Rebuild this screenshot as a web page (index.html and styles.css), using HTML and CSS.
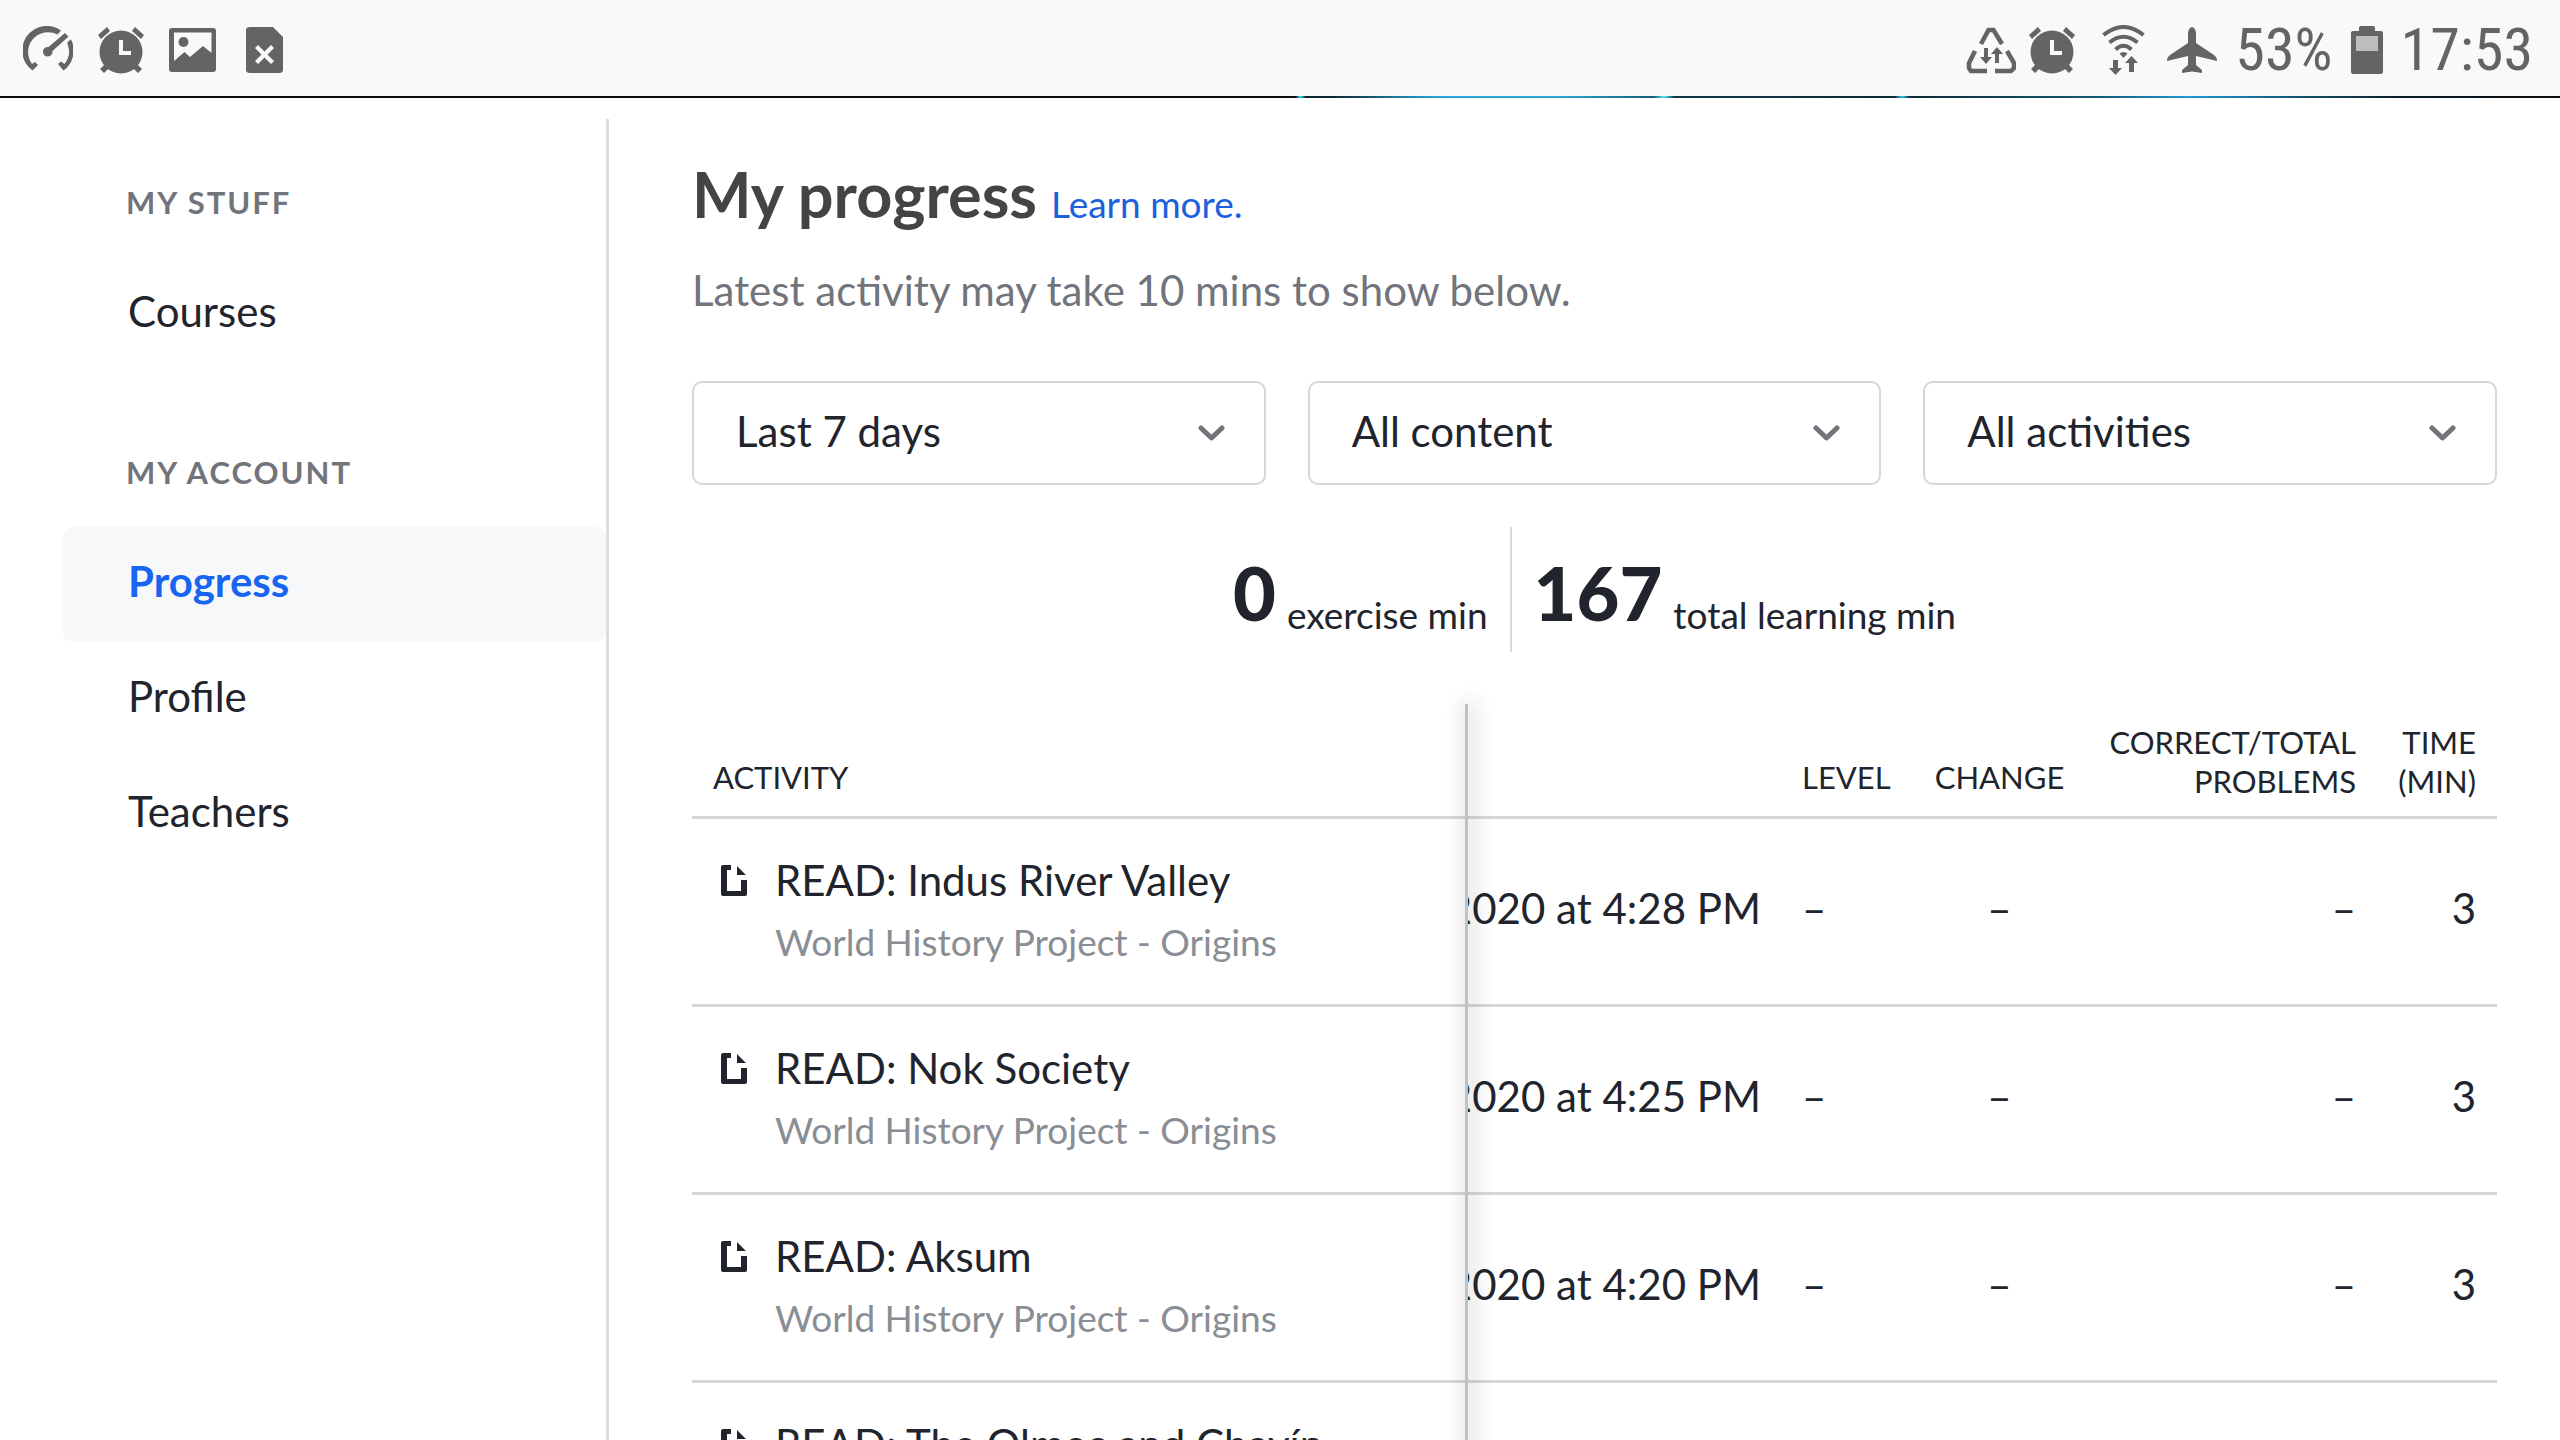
FILE: index.html
```html
<!DOCTYPE html>
<html lang="en">
<head>
<meta charset="utf-8">
<title>My progress</title>
<link rel="stylesheet" href="styles.css">
</head>
<body>
<svg class="defs" aria-hidden="true">
  <symbol id="alarm" viewBox="0 0 48 48">
    <path d="M1 9 10 1 13 5 4 13ZM35 5 38 1 47 9 44 13ZM3 43 8 38 12 42 7 47ZM36 42 40 38 45 43 41 47Z"/>
    <path fill-rule="evenodd" d="M24 4.500a21.500 21.500 0 1 0 0 43a21.500 21.500 0 1 0 0-43ZM22 14H26V25H34V29H22Z"/>
  </symbol>
  <symbol id="article" viewBox="0 0 26 31">
    <path d="M2 0H10V5H6V26H20V15H26V29Q26 31 24 31H2Q0 31 0 29V2Q0 0 2 0ZM16 1 25 10H16Z"/>
  </symbol>
  <symbol id="chevron" viewBox="0 0 27 16">
    <path d="M3 3 13.500 13 24 3" fill="none" stroke="currentColor" stroke-width="5" stroke-linecap="round" stroke-linejoin="round"/>
  </symbol>
</svg>
<header class="status">
  <div class="status-left">
    <svg width="50" height="48" viewBox="0 0 50 48">
      <path d="M38 4.500A24.500 24.500 0 0 0 9.500 44.500L15 39 12 36 9 38A20 20 0 0 1 34.500 8.500ZM44.500 16 48 13.500A24.500 24.500 0 0 1 40.500 44.500L35 38 38 35.500 41.500 38A20 20 0 0 0 44.500 18Z"/>
      <path d="M42 7 45.500 10.500 29.500 25A4.800 4.800 0 1 1 25.500 21Z"/>
    </svg>
    <svg width="48" height="48"><use href="#alarm"/></svg>
    <svg width="47" height="48" viewBox="0 0 47 48">
      <path fill-rule="evenodd" d="M3 2H44Q47 2 47 5V43Q47 46 44 46H3Q0 46 0 43V5Q0 2 3 2ZM5 6.500V35L15.500 26 21 31 34 20 42.500 27V6.500Z"/>
      <circle cx="14.500" cy="16" r="5"/>
    </svg>
    <svg width="37" height="48" viewBox="0 0 37 48">
      <path fill-rule="evenodd" d="M4 1H27L37 11V44Q37 47 33 47H4Q0 47 0 44V4Q0 1 4 1ZM9 22 15.500 28.500 9 35 12 38 18.500 31.500 25 38 28 35 21.500 28.500 28 22 25 19 18.500 25.500 12 19Z"/>
    </svg>
  </div>
  <div class="status-right">
    <div class="signals">
      <svg width="50" height="48" viewBox="0 0 50 48">
        <path d="M15 18 22.500 4H27.500L36 18M9 25 3 37V42L5 45H21M41 25 48 37V42L45 45H29" fill="none" stroke="currentColor" stroke-width="4.500"/>
        <path d="M18 22H22V31H26L20 38 14 31H18ZM29 37V28H25L31 21 37 28H33V37Z"/>
      </svg>
      <svg width="48" height="48"><use href="#alarm"/></svg>
    </div>
    <svg class="wifi" width="43" height="50" viewBox="0 0 43 50">
      <path d="M1.500 10Q21.500-6 41.500 10M7.500 17.500Q21.500 6 35.500 17.500M13.500 24.500Q21.500 17 29.500 24.500" fill="none" stroke="currentColor" stroke-width="4"/>
      <path d="M21.500 33 17.500 28.500Q21.500 25.500 25.500 28.500ZM11 35H16V43H20L13.500 50 7 43H11ZM27 47V38H23L29.500 31 36 38H32V47Z"/>
    </svg>
    <svg width="50" height="48" viewBox="0 0 50 48">
      <path d="M25 1Q29 2 29 8V17L47 29Q50 31 50 35L29 30V39L35 44V47L25 45.500 15 47V44L21 39V30L0 35Q0 31 3 29L21 17V8Q21 2 25 1Z"/>
    </svg>
    <span>53%</span>
    <svg width="32" height="48" viewBox="0 0 32 48">
      <path d="M8 5V2Q8 0 10 0H22Q24 0 24 2V5H30Q32 5 32 7V46Q32 48 30 48H2Q0 48 0 46V7Q0 5 2 5Z"/>
      <rect x="5" y="10" width="22" height="15" fill="#bdbdbd"/>
    </svg>
    <span>17:53</span>
  </div>
</header>
<div class="strip"></div>
<div class="page">
  <nav class="sidebar">
    <h2>MY STUFF</h2>
    <a href="#courses">Courses</a>
    <h2>MY ACCOUNT</h2>
    <a href="#progress" class="active" aria-current="page">Progress</a>
    <a href="#profile">Profile</a>
    <a href="#teachers">Teachers</a>
  </nav>
  <main>
    <div class="title">
      <h1>My progress</h1>
      <a href="#learn">Learn more.</a>
    </div>
    <p class="note">Latest activity may take 10 mins to show below.</p>
    <div class="filters">
      <div class="filter">
        <select aria-label="Date range"><option>Last 7 days</option></select>
        <svg width="27" height="16"><use href="#chevron"/></svg>
      </div>
      <div class="filter">
        <select aria-label="Content"><option>All content</option></select>
        <svg width="27" height="16"><use href="#chevron"/></svg>
      </div>
      <div class="filter">
        <select aria-label="Activity type"><option>All activities</option></select>
        <svg width="27" height="16"><use href="#chevron"/></svg>
      </div>
    </div>
    <div class="stats">
      <div class="stat"><strong>0</strong><span>exercise min</span></div>
      <div class="stat"><strong>167</strong><span>total learning min</span></div>
    </div>
    <div class="activity">
      <table>
        <colgroup><col><col class="c-date"><col class="c-level"><col class="c-change"><col class="c-problems"><col class="c-time"></colgroup>
        <thead>
          <tr><th class="name">ACTIVITY</th><td></td><th>LEVEL</th><th class="mid">CHANGE</th><th class="num two">CORRECT/TOTAL<br>PROBLEMS</th><th class="num two">TIME<br>(MIN)</th></tr>
        </thead>
        <tbody>
          <tr>
            <td class="name"><div class="item"><svg width="26" height="31"><use href="#article"/></svg><span>READ: Indus River Valley</span></div><div class="course">World History Project - Origins</div></td>
            <td class="date"><div>2020 at 4:28 PM</div></td><td>–</td><td class="mid">–</td><td class="num">–</td><td class="num">3</td>
          </tr>
          <tr>
            <td class="name"><div class="item"><svg width="26" height="31"><use href="#article"/></svg><span>READ: Nok Society</span></div><div class="course">World History Project - Origins</div></td>
            <td class="date"><div>2020 at 4:25 PM</div></td><td>–</td><td class="mid">–</td><td class="num">–</td><td class="num">3</td>
          </tr>
          <tr>
            <td class="name"><div class="item"><svg width="26" height="31"><use href="#article"/></svg><span>READ: Aksum</span></div><div class="course">World History Project - Origins</div></td>
            <td class="date"><div>2020 at 4:20 PM</div></td><td>–</td><td class="mid">–</td><td class="num">–</td><td class="num">3</td>
          </tr>
          <tr>
            <td class="name"><div class="item"><svg width="26" height="31"><use href="#article"/></svg><span>READ: The Olmec and Chavín</span></div></td>
            <td></td><td></td><td></td><td></td><td></td>
          </tr>
        </tbody>
      </table>
      <div class="edge"></div>
    </div>
  </main>
</div>
</body>
</html>
```
FILE: styles.css
```css
* { box-sizing: border-box; }
body {
  margin: 0;
  height: 100vh;
  display: flex;
  flex-direction: column;
  overflow: hidden;
  background: #fff;
  color: #21242c;
  font: 42px/50px Lato, sans-serif;
}
h1, h2, p { margin: 0; }
a { text-decoration: none; }
svg { flex: none; fill: currentColor; }
.defs { position: absolute; width: 0; height: 0; }

.status {
  flex: none;
  height: 96px;
  padding: 3px 27px 0 23px;
  display: flex;
  justify-content: space-between;
  align-items: center;
  background: #f9f9f9;
  color: #646464;
}
.status-left, .status-right, .signals { display: flex; align-items: center; }
.status-left { gap: 24px; }
.status-left svg:last-child { margin-left: 6px; }
.status-right { gap: 18px; font: 60px/70px "Roboto Condensed", "Liberation Sans Narrow", Roboto, sans-serif; }
.signals { gap: 12px; }
.wifi { margin: 0 4px 0 8px; }

.strip {
  flex: none;
  height: 2px;
  background: linear-gradient(90deg, #0a0c10 0%, #0a0c10 50.6%, #36e0f5 50.8%, #0c2530 51%, #0c2530 52%, #29a3d6 56%, #2ba5cf 61%, #146078 64.6%, #52e8ff 65%, #0e3848 65.4%, #0d2a35 74%, #2cc9f0 74.3%, #0d2a35 74.600%, #135a75 82%, #1f9ad6 85.5%, #12506a 90%, #0a1a22 94%, #0a0c10 100%);
}

.page { flex: 1; display: flex; min-height: 0; }
.sidebar {
  width: 609px;
  margin-top: 21px;
  padding: 28px 0 0 63px;
  border-right: 3px solid #dcdddd;
  display: flex;
  flex-direction: column;
}
.sidebar h2 {
  padding: 34px 63px;
  font-size: 31px;
  line-height: 42px;
  font-weight: 700;
  letter-spacing: 2px;
  color: #71747b;
}
.sidebar a {
  padding: 29px 65px 36px;
  border-radius: 10px;
  color: #21242c;
}
.sidebar a + h2 { margin-top: 45px; }
.sidebar .active { background: #f7f8fa; color: #1865f2; font-weight: 700; }

main {
  flex: 1;
  min-width: 0;
  padding: 58px 63px 0 83px;
  display: flex;
  flex-direction: column;
}
.title { display: flex; align-items: baseline; gap: 14px; }
h1 { font-size: 63px; line-height: 76px; color: #444; }
.title a { font-size: 37px; color: #1b60dc; }
.note { margin-top: 33px; color: #71747b; }
.filters { margin-top: 66px; display: flex; gap: 42px; }
.filter { flex: 1; display: grid; align-items: center; }
.filter select, .filter svg { grid-area: 1 / 1; }
.filter select {
  appearance: none;
  width: 100%;
  height: 104px;
  padding: 0 80px 4px 42px;
  border: 2px solid #d6d7d8;
  border-radius: 10px;
  background: #fff;
  font: inherit;
  color: inherit;
}
.filter svg { justify-self: end; margin-right: 41px; color: #71747b; pointer-events: none; }

.stats { margin-top: 42px; display: flex; justify-content: center; }
.stat { height: 125px; padding: 0 22px 12px; display: flex; align-items: flex-end; gap: 11px; }
.stat + .stat { border-left: 2px solid #d8d9da; }
.stat strong { font-size: 74px; line-height: 94px; font-weight: 900; }
.stat span { font-size: 37px; }

.activity { position: relative; margin-top: 52px; }
table { width: 100%; table-layout: fixed; border-collapse: separate; border-spacing: 0; }
.c-date { width: 314px; }
.c-level { width: 132px; }
.c-change { width: 173px; }
.c-problems { width: 291px; }
.c-time { width: 120px; }
th {
  padding: 18px 21px 19px;
  font-size: 31px;
  line-height: 39px;
  font-weight: 400;
  text-align: left;
  vertical-align: bottom;
}
th, td { border-bottom: 3px solid #d6d7d8; }
th.two { padding: 19px 21px 15px 0; }
tbody td { padding: 0 21px 8px; }
tbody td.name { padding: 36px 21px 37px; }
.mid { text-align: center; }
.num { text-align: right; }
td.date > div { display: flex; justify-content: flex-end; white-space: nowrap; }
tbody td.date { padding-left: 0; padding-right: 20px; overflow: hidden; }
.item { display: flex; align-items: center; gap: 28px; padding-left: 8px; }
.course { margin-top: 12px; padding-left: 62px; font-size: 37px; color: #898d94; }
.edge {
  position: absolute;
  top: 0;
  bottom: 0;
  right: 1029px;
  width: 3px;
  background: #c0c1c3;
  box-shadow: 3px 0 20px 3px rgba(33, 36, 44, .2);
}
```
